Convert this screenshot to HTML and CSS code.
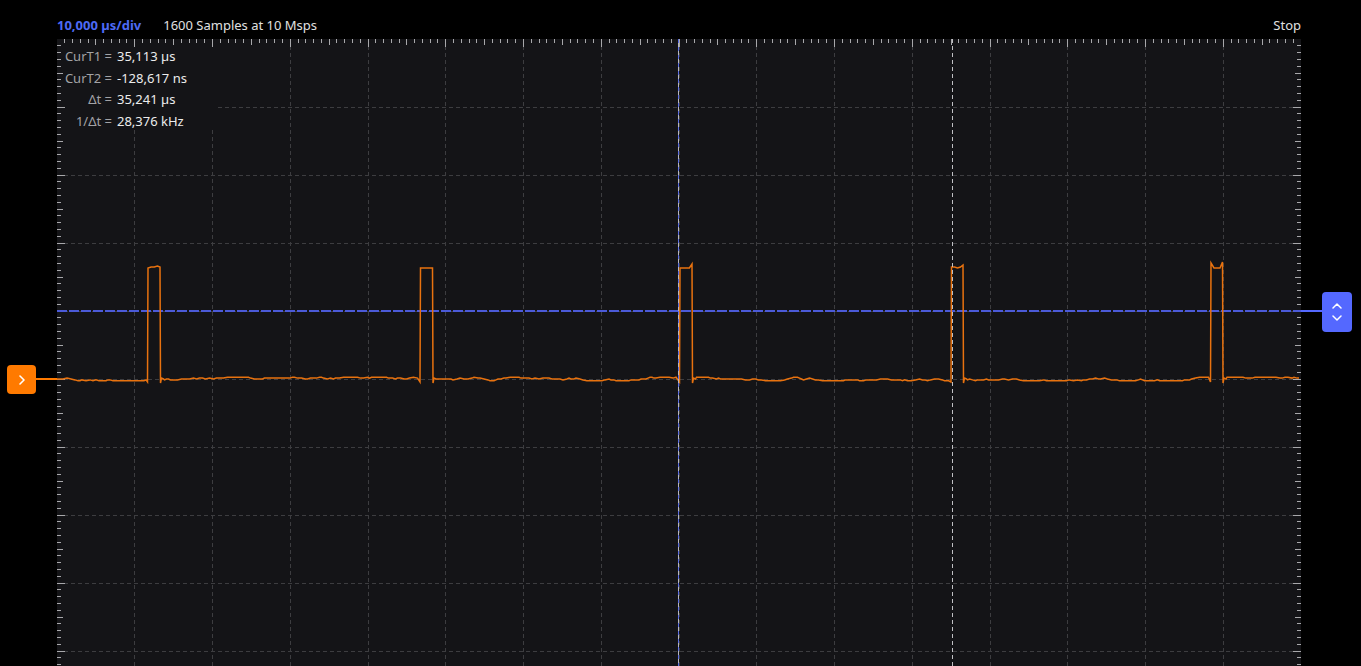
FILE: index.html
```html
<!DOCTYPE html>
<html lang="en">
<head>
<meta charset="utf-8">
<title>Scope</title>
<link rel="stylesheet" href="styles.css">
</head>
<body>
<div class="scope">
  <div class="header">
    <span class="timebase">10,000 µs/div</span>
    <span class="samples">1600 Samples at 10 Msps</span>
    <span class="status">Stop</span>
  </div>
  <div class="main">
    <div class="gutter gutter-left">
      <div class="offset-line offset-line-left"></div>
      <div class="marker marker-ch1">
        <svg width="8" height="10" viewBox="0 0 8 10"><path d="M2 1 L6 5 L2 9" fill="none" stroke="#fff" stroke-width="1.6" stroke-linecap="round" stroke-linejoin="round"/></svg>
      </div>
    </div>
    <div class="plot">
      <svg id="scope" class="plot-svg" width="1244" height="680" viewBox="0 0 1244 680">
        <g class="grid" stroke="#3d3d40" stroke-width="1" stroke-dasharray="4 3">
          <line x1="77.5" y1="0" x2="77.5" y2="680"/>
          <line x1="155.5" y1="0" x2="155.5" y2="680"/>
          <line x1="233.5" y1="0" x2="233.5" y2="680"/>
          <line x1="311.5" y1="0" x2="311.5" y2="680"/>
          <line x1="388.5" y1="0" x2="388.5" y2="680"/>
          <line x1="466.5" y1="0" x2="466.5" y2="680"/>
          <line x1="544.5" y1="0" x2="544.5" y2="680"/>
          <line x1="622.5" y1="0" x2="622.5" y2="680"/>
          <line x1="699.5" y1="0" x2="699.5" y2="680"/>
          <line x1="777.5" y1="0" x2="777.5" y2="680"/>
          <line x1="855.5" y1="0" x2="855.5" y2="680"/>
          <line x1="933.5" y1="0" x2="933.5" y2="680"/>
          <line x1="1010.5" y1="0" x2="1010.5" y2="680"/>
          <line x1="1088.5" y1="0" x2="1088.5" y2="680"/>
          <line x1="1166.5" y1="0" x2="1166.5" y2="680"/>
          <line x1="0" y1="68.5" x2="1244" y2="68.5"/>
          <line x1="0" y1="136.5" x2="1244" y2="136.5"/>
          <line x1="0" y1="204.5" x2="1244" y2="204.5"/>
          <line x1="0" y1="272.5" x2="1244" y2="272.5"/>
          <line x1="0" y1="340.5" x2="1244" y2="340.5"/>
          <line x1="0" y1="408.5" x2="1244" y2="408.5"/>
          <line x1="0" y1="476.5" x2="1244" y2="476.5"/>
          <line x1="0" y1="544.5" x2="1244" y2="544.5"/>
          <line x1="0" y1="612.5" x2="1244" y2="612.5"/>
        </g>
        <rect class="readout-bg" x="8" y="7" width="150" height="84" fill="#141417"/>
        <path id="ticks" d="" stroke="#a8a8ab" stroke-width="1" fill="none"/>
        <line x1="0" y1="272" x2="1244" y2="272" stroke="#4b5ad8" stroke-width="2" stroke-dasharray="10 2"/>
        <path id="wave" d="" fill="none" stroke="#e8720f" stroke-width="1.5" stroke-linejoin="miter"/>
        <line x1="621.5" y1="0" x2="621.5" y2="680" stroke="#5d6fe6" stroke-width="1" stroke-dasharray="4 4"/>
        <line x1="621.5" y1="0" x2="621.5" y2="680" stroke="#b8b8bc" stroke-width="1" stroke-dasharray="4 4" stroke-dashoffset="4"/>
        <line x1="895.5" y1="0" x2="895.5" y2="680" stroke="#c0c0c4" stroke-width="1" stroke-dasharray="4 3"/>
      </svg>
      <div class="readout">
        <div class="row"><span class="label">CurT1 =</span><span class="value">35,113 µs</span></div>
        <div class="row"><span class="label">CurT2 =</span><span class="value">-128,617 ns</span></div>
        <div class="row"><span class="label">Δt =</span><span class="value">35,241 µs</span></div>
        <div class="row"><span class="label">1/Δt =</span><span class="value">28,376 kHz</span></div>
      </div>
    </div>
    <div class="gutter gutter-right">
      <div class="offset-line offset-line-right"></div>
      <div class="marker marker-cursor">
        <svg width="10" height="6" viewBox="0 0 10 6"><path d="M1 5 L5 1 L9 5" fill="none" stroke="#fff" stroke-width="1.5" stroke-linecap="round" stroke-linejoin="round"/></svg>
        <svg width="10" height="6" viewBox="0 0 10 6"><path d="M1 1 L5 5 L9 1" fill="none" stroke="#fff" stroke-width="1.5" stroke-linecap="round" stroke-linejoin="round"/></svg>
      </div>
    </div>
  </div>
</div>
<script src="script.js"></script>
</body>
</html>
```

FILE: styles.css
```css
html, body {
  margin: 0;
  padding: 0;
  background: #000;
  overflow: hidden;
}
body {
  width: 1361px;
  height: 666px;
  font-family: "Noto Sans", "Open Sans", sans-serif;
  font-size: 13px;
  color: #e6e6e6;
}
.scope {
  display: flex;
  flex-direction: column;
}
.header {
  height: 39px;
  display: flex;
  align-items: center;
  padding: 12px 60px 1px 57px;
  box-sizing: border-box;
}
.timebase {
  color: #4d6af5;
  font-weight: 700;
}
.samples {
  margin-left: 22px;
  color: #e0e0e0;
}
.status {
  margin-left: auto;
  color: #e0e0e0;
}
.main {
  display: flex;
  height: 627px;
}
.gutter {
  position: relative;
  flex: none;
}
.gutter-left {
  width: 57px;
}
.gutter-right {
  width: 60px;
}
.plot {
  position: relative;
  width: 1244px;
  height: 627px;
  background: #141417;
  overflow: hidden;
  flex: none;
}
.plot-svg {
  display: block;
}
.readout {
  position: absolute;
  left: 0;
  top: 7px;
  display: grid;
  grid-template-columns: 55px auto;
  column-gap: 5px;
  row-gap: 0;
}
.row {
  display: contents;
}
.row .label {
  text-align: right;
  color: #a3a3a6;
  line-height: 21.5px;
  white-space: nowrap;
}
.row .value {
  color: #ececec;
  line-height: 21.5px;
  white-space: nowrap;
}
.offset-line {
  position: absolute;
  height: 2px;
}
.offset-line-left {
  left: 30px;
  right: 0;
  top: 339px;
  background: #ff7a00;
}
.offset-line-right {
  left: 0;
  width: 24px;
  top: 271px;
  background: #5468ff;
}
.marker {
  position: absolute;
  border-radius: 4px;
  display: flex;
  align-items: center;
  justify-content: center;
}
.marker-ch1 {
  left: 7px;
  top: 326px;
  width: 29px;
  height: 29px;
  background: #ff7a00;
}
.marker-cursor {
  left: 21px;
  top: 253px;
  width: 30px;
  height: 40px;
  background: #5468ff;
  flex-direction: column;
  gap: 6px;
}
.marker-cursor svg {
  display: block;
}
```

FILE: script.js
```js
(function () {
  var W = 1244;
  var d = '';
  var k, x, y, L;
  for (k = 1; k < 160; k++) {
    x = Math.floor(k * W / 160) + 0.5;
    L = k % 10 === 0 ? 8 : (k % 5 === 0 ? 6 : 4);
    d += 'M' + x + ' 0v' + L;
  }
  for (k = 1; k < 100; k++) {
    y = Math.floor(k * 6.8) + 0.5;
    L = k % 10 === 0 ? 8 : (k % 5 === 0 ? 6 : 4);
    d += 'M0 ' + y + 'h' + L + 'M' + W + ' ' + y + 'h-' + L;
  }
  document.getElementById('ticks').setAttribute('d', d);

  var seed = 12345;
  function rnd() {
    seed = (seed * 1103515245 + 12345) & 0x7fffffff;
    return seed / 0x7fffffff;
  }
  var OX = 57, OY = 39;
  var base = 379;
  var pulses = [
    { r: 148, f: 160.5, top: [268, 267, 267, 266, 267] },
    { r: 420.5, f: 433, top: [268, 268, 268, 268, 268] },
    { r: 680, f: 692.5, top: [268, 268, 268, 268, 264] },
    { r: 951.5, f: 963.5, top: [267, 267, 268, 267, 265] },
    { r: 1211, f: 1223, top: [263, 268, 268, 268, 262] }
  ];
  var pts = [];
  var n = 0;
  var pi = 0;
  x = OX;
  while (x <= OX + W) {
    var p = pulses[pi];
    if (p && x >= p.r - 1) {
      pts.push([p.r - 0.5, 382]);
      pts.push([p.r, p.top[0]]);
      var span = p.f - p.r;
      for (var j = 1; j < p.top.length; j++) {
        pts.push([p.r + span * j / (p.top.length - 1) - (j === p.top.length - 1 ? 0.5 : 0), p.top[j]]);
      }
      pts.push([p.f, 383]);
      pts.push([p.f + 1, 378]);
      pts.push([p.f + 3, 379]);
      x = p.f + 4;
      pi++;
      continue;
    }
    var r = rnd();
    if (r < 0.3) n -= 1; else if (r > 0.7) n += 1;
    if (n > 2) n = 2;
    if (n < -2) n = -2;
    pts.push([x, base + n * 0.9]);
    x += 2 + Math.floor(rnd() * 3);
  }
  var wd = '';
  for (var i = 0; i < pts.length; i++) {
    wd += (i === 0 ? 'M' : 'L') + (pts[i][0] - OX).toFixed(1) + ' ' + (pts[i][1] - OY).toFixed(1);
  }
  document.getElementById('wave').setAttribute('d', wd);
})();
```
